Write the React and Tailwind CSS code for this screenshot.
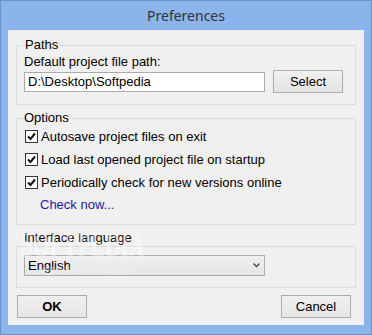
import React from "react";

const font = { fontFamily: '"Liberation Sans", Arial, sans-serif' };

function Check({ label }) {
  return (
    <div className="flex h-[23px] items-center">
      <div className="ml-[8px] flex h-[13px] w-[13px] items-center justify-center border border-[#333333] bg-white">
        <svg width="9" height="9" viewBox="0 0 9 9">
          <path d="M1 4.5 L3.5 7 L8 1.5" fill="none" stroke="#111" strokeWidth="2" />
        </svg>
      </div>
      <span className="ml-[3px] text-[13px] leading-[16px] text-black">{label}</span>
    </div>
  );
}

function Btn({ children, className = "" }) {
  return (
    <button
      className={
        "flex h-[23px] w-[70px] items-center justify-center border border-[#acacac] bg-gradient-to-b from-[#f0f0f0] to-[#e5e5e5] text-[13px] text-black " +
        className
      }
    >
      {children}
    </button>
  );
}

export default function App() {
  return (
    <div
      className="relative h-[335px] w-[372px] overflow-hidden border border-[#6a93cc] bg-[#8bb4ec]"
      style={font}
    >
      <div
        className="flex h-[29px] items-center justify-center text-[14px] text-[#333333]"
        style={{ fontFamily: '"Noto Sans", "Open Sans", sans-serif' }}
      >
        Preferences
      </div>
      <div className="mx-[7px] h-[295px] bg-[#f0f0f0] px-[8px] pt-[7px]">
        <fieldset className="border border-[#dcdcdc] px-[7px] pb-[11px]">
          <legend className="ml-[1px] text-[13px] leading-[16px] text-black">Paths</legend>
          <div className="mt-[1px] text-[13px] leading-[16px] text-black">Default project file path:</div>
          <div className="flex items-center">
            <div className="flex h-[20px] w-[241px] items-center border border-[#ababab] bg-white px-[3px] text-[13px] text-black">
              D:\Desktop\Softpedia
            </div>
            <Btn className="ml-[8px] h-[20px] w-[70px]">Select</Btn>
          </div>
        </fieldset>

        <fieldset className="mt-[5px] border border-[#dcdcdc] pb-[9px]">
          <legend className="ml-[7px] text-[13px] leading-[16px] text-black">Options</legend>
          <div className="-mt-[1px]">
            <Check label="Autosave project files on exit" />
            <Check label="Load last opened project file on startup" />
            <Check label="Periodically check for new versions online" />
            <div className="flex h-[21px] items-center pl-[23px] text-[13px] text-[#1b1ba8]">Check now...</div>
          </div>
        </fieldset>

        <div className="mt-[5px] pl-[8px] text-[13px] leading-[16px] text-black">Interface language</div>
        <div className="border border-[#dcdcdc] px-[7px] pb-[11px] pt-[8px]">
          <div className="flex h-[21px] w-[241px] items-center justify-between border border-[#acacac] bg-gradient-to-b from-[#f0f0f0] to-[#e5e5e5] pl-[3px] pr-[4px] text-[13px] text-black">
            <span>English</span>
            <svg width="7" height="5" viewBox="0 0 7 5">
              <path d="M0.5 0.5 L3.5 3.5 L6.5 0.5" fill="none" stroke="#444" strokeWidth="1.4" />
            </svg>
          </div>
        </div>

        <div className="mt-[7px] flex justify-between pl-[1px] pr-[5px]">
          <Btn className="font-bold">OK</Btn>
          <Btn>Cancel</Btn>
        </div>
      </div>
      <div
        className="pointer-events-none absolute left-[20px] top-[226px] origin-left scale-x-[0.6] text-[36px] font-bold leading-[36px] text-white opacity-40"
        style={{ fontFamily: '"Liberation Serif", serif' }}
      >
        SOFTPEDIA
      </div>
      <div className="pointer-events-none absolute left-[40px] top-[262px] text-[11px] leading-[12px] text-white opacity-40">
        www.softpedia.com
      </div>
    </div>
  );
}
